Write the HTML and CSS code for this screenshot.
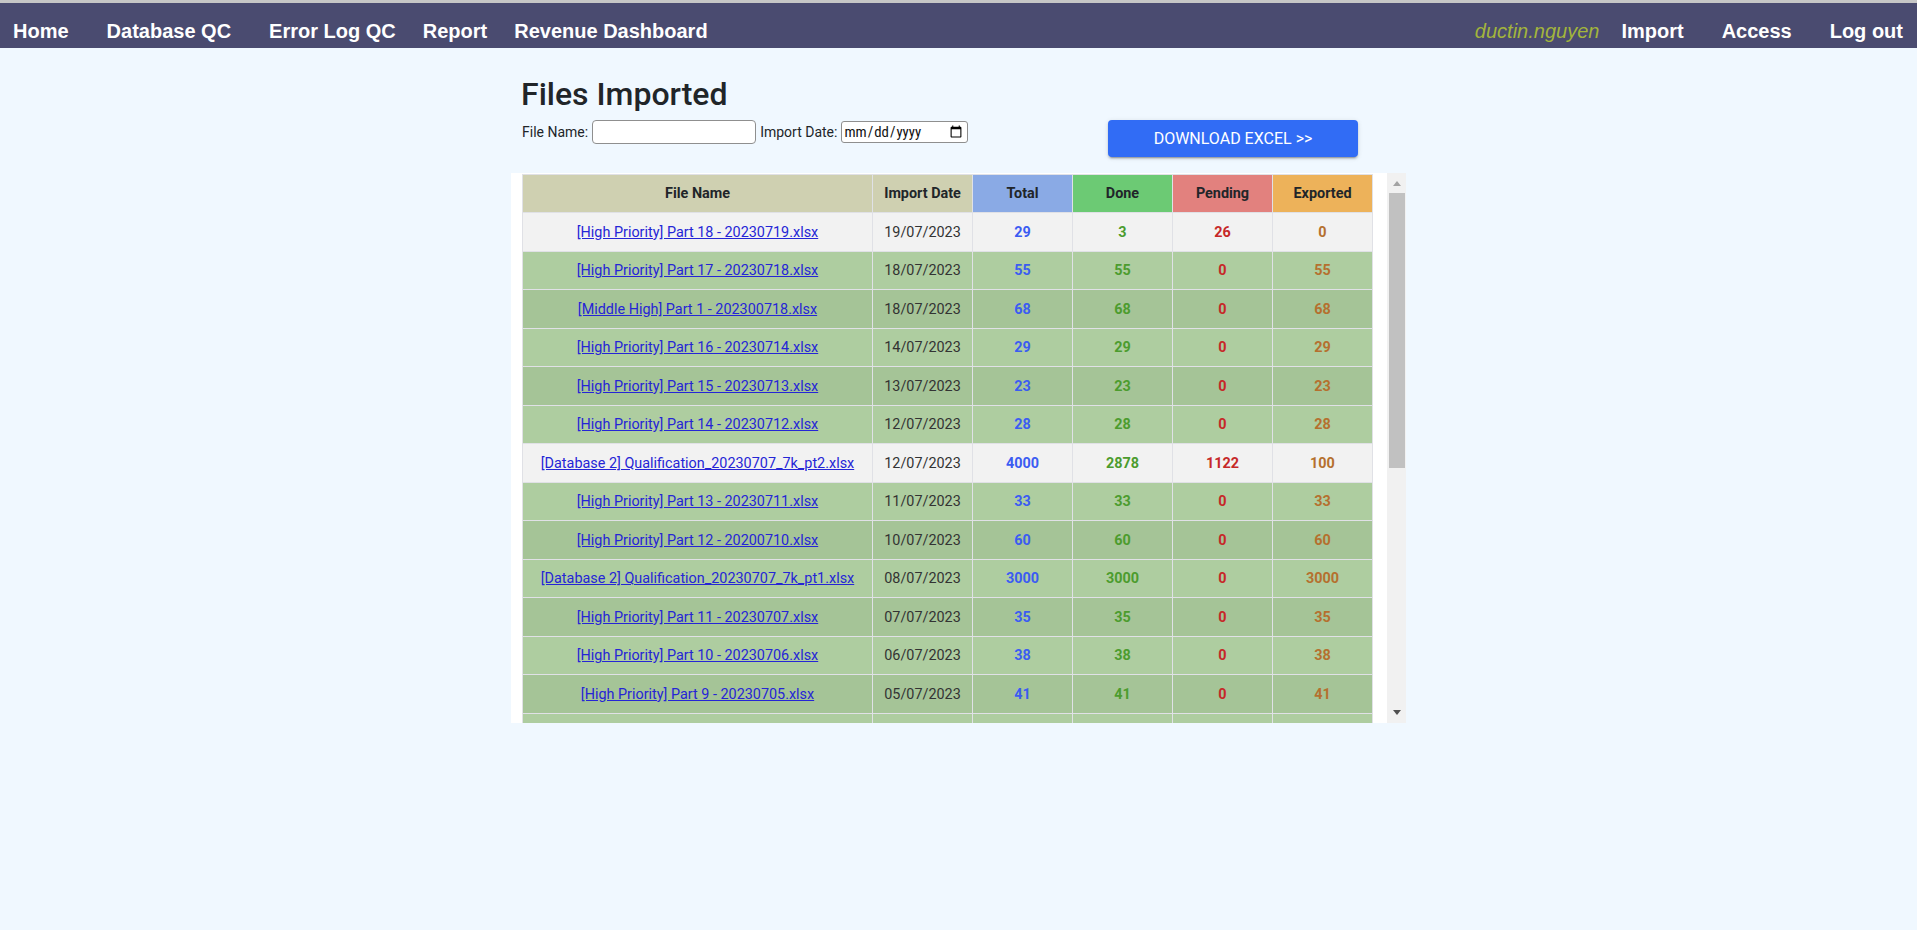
FILE: index.html
```html
<!DOCTYPE html>
<html lang="en">
<head>
<meta charset="utf-8">
<title>Files Imported</title>
<link rel="stylesheet" href="styles.css">
</head>
<body>
<nav class="topnav">
  <div class="nav-group">
    <a class="nav-link nav-link--wide" href="#">Home</a>
    <a class="nav-link nav-link--wide" href="#">Database QC</a>
    <a class="nav-link nav-link--mid" href="#">Error Log QC</a>
    <a class="nav-link nav-link--mid" href="#">Report</a>
    <a class="nav-link" href="#">Revenue Dashboard</a>
  </div>
  <div class="nav-group">
    <span class="nav-user">ductin.nguyen</span>
    <a class="nav-link nav-link--wide" href="#">Import</a>
    <a class="nav-link nav-link--wide" href="#">Access</a>
    <a class="nav-link" href="#">Log out</a>
  </div>
</nav>

<main class="page">
  <h2 class="page-title">Files Imported</h2>
  <div class="filters">
    <div class="filter-group">
      <label class="filter-label" for="fname">File Name:</label>
      <input class="text-input" id="fname" type="text">
      <label class="filter-label" for="fdate">Import Date:</label>
      <input class="date-input" id="fdate" type="date">
    </div>
    <button class="btn-download" type="button">DOWNLOAD EXCEL &gt;&gt;</button>
  </div>

  <div class="table-box">
    <div class="table-viewport">
      <table class="files-table">
        <colgroup>
          <col class="col-name"><col class="col-num"><col class="col-num"><col class="col-num"><col class="col-num"><col class="col-num">
        </colgroup>
        <thead>
          <tr>
            <th class="th-name">File Name</th>
            <th class="th-name">Import Date</th>
            <th class="th-total">Total</th>
            <th class="th-done">Done</th>
            <th class="th-pending">Pending</th>
            <th class="th-exported">Exported</th>
          </tr>
        </thead>
        <tbody>
          <tr class="pending"><td><a href="#">[High Priority] Part 18 - 20230719.xlsx</a></td><td class="date">19/07/2023</td><td class="n-total">29</td><td class="n-done">3</td><td class="n-pending">26</td><td class="n-exported">0</td></tr>
          <tr class="done"><td><a href="#">[High Priority] Part 17 - 20230718.xlsx</a></td><td class="date">18/07/2023</td><td class="n-total">55</td><td class="n-done">55</td><td class="n-pending">0</td><td class="n-exported">55</td></tr>
          <tr class="done"><td><a href="#">[Middle High] Part 1 - 202300718.xlsx</a></td><td class="date">18/07/2023</td><td class="n-total">68</td><td class="n-done">68</td><td class="n-pending">0</td><td class="n-exported">68</td></tr>
          <tr class="done"><td><a href="#">[High Priority] Part 16 - 20230714.xlsx</a></td><td class="date">14/07/2023</td><td class="n-total">29</td><td class="n-done">29</td><td class="n-pending">0</td><td class="n-exported">29</td></tr>
          <tr class="done"><td><a href="#">[High Priority] Part 15 - 20230713.xlsx</a></td><td class="date">13/07/2023</td><td class="n-total">23</td><td class="n-done">23</td><td class="n-pending">0</td><td class="n-exported">23</td></tr>
          <tr class="done"><td><a href="#">[High Priority] Part 14 - 20230712.xlsx</a></td><td class="date">12/07/2023</td><td class="n-total">28</td><td class="n-done">28</td><td class="n-pending">0</td><td class="n-exported">28</td></tr>
          <tr class="pending"><td><a href="#">[Database 2] Qualification_20230707_7k_pt2.xlsx</a></td><td class="date">12/07/2023</td><td class="n-total">4000</td><td class="n-done">2878</td><td class="n-pending">1122</td><td class="n-exported">100</td></tr>
          <tr class="done"><td><a href="#">[High Priority] Part 13 - 20230711.xlsx</a></td><td class="date">11/07/2023</td><td class="n-total">33</td><td class="n-done">33</td><td class="n-pending">0</td><td class="n-exported">33</td></tr>
          <tr class="done"><td><a href="#">[High Priority] Part 12 - 20200710.xlsx</a></td><td class="date">10/07/2023</td><td class="n-total">60</td><td class="n-done">60</td><td class="n-pending">0</td><td class="n-exported">60</td></tr>
          <tr class="done"><td><a href="#">[Database 2] Qualification_20230707_7k_pt1.xlsx</a></td><td class="date">08/07/2023</td><td class="n-total">3000</td><td class="n-done">3000</td><td class="n-pending">0</td><td class="n-exported">3000</td></tr>
          <tr class="done"><td><a href="#">[High Priority] Part 11 - 20230707.xlsx</a></td><td class="date">07/07/2023</td><td class="n-total">35</td><td class="n-done">35</td><td class="n-pending">0</td><td class="n-exported">35</td></tr>
          <tr class="done"><td><a href="#">[High Priority] Part 10 - 20230706.xlsx</a></td><td class="date">06/07/2023</td><td class="n-total">38</td><td class="n-done">38</td><td class="n-pending">0</td><td class="n-exported">38</td></tr>
          <tr class="done"><td><a href="#">[High Priority] Part 9 - 20230705.xlsx</a></td><td class="date">05/07/2023</td><td class="n-total">41</td><td class="n-done">41</td><td class="n-pending">0</td><td class="n-exported">41</td></tr>
          <tr class="done"><td><a href="#">[High Priority] Part 8 - 20230704.xlsx</a></td><td class="date">04/07/2023</td><td class="n-total">45</td><td class="n-done">45</td><td class="n-pending">0</td><td class="n-exported">45</td></tr>
        </tbody>
      </table>
    </div>
    <div class="scrollbar" aria-hidden="true">
      <div class="sb-btn"><span class="sb-arrow sb-arrow--up"></span></div>
      <div class="sb-track"><div class="sb-thumb"></div></div>
      <div class="sb-btn"><span class="sb-arrow sb-arrow--down"></span></div>
    </div>
  </div>
</main>
</body>
</html>
```

FILE: styles.css
```css
* {
  box-sizing: border-box;
}

html,
body {
  margin: 0;
  padding: 0;
}

body {
  background: #f0f8ff;
  color: #212529;
  font-family: Roboto, "Noto Sans", "Liberation Sans", sans-serif;
}

/* ---------- top navigation ---------- */
.topnav {
  display: flex;
  align-items: center;
  justify-content: space-between;
  height: 48px;
  padding: 12px 14px 0 13px;
  border-top: 3px solid #c6c6c6;
  background: #4a4b70;
  font-family: "Liberation Sans", Arial, sans-serif;
  font-size: 20px;
  font-weight: 700;
}

.nav-group {
  display: flex;
  align-items: center;
}

.nav-link {
  color: #ffffff;
  text-decoration: none;
}

.nav-link--wide {
  margin-right: 38px;
}

.nav-link--mid {
  margin-right: 27px;
}

.nav-user {
  margin-right: 22px;
  color: #a3b53c;
  font-style: italic;
  font-weight: 400;
}

/* ---------- page ---------- */
.page {
  width: 895px;
  margin: 0 auto;
}

.page-title {
  margin: 27px 0 7px;
  padding-left: 10px;
  font-size: 32px;
  font-weight: 500;
  line-height: 1.2;
  color: #212529;
}

.filters {
  display: flex;
  align-items: flex-start;
  padding: 0 48px 0 11px;
}

.filter-group {
  display: flex;
  align-items: center;
  gap: 4px;
  height: 24px;
}

.filter-label {
  font-size: 14px;
  color: #212529;
}

.text-input {
  width: 164px;
  height: 24px;
  margin: 0;
  padding: 1px 4px;
  border: 1px solid #8f8f8f;
  border-radius: 4px;
  background: #fff;
  font-family: Roboto, sans-serif;
  font-size: 14px;
}

.date-input {
  width: 127px;
  height: 22px;
  margin: 0;
  padding: 0 2px 0 1px;
  border: 1px solid #8f8f8f;
  border-radius: 3px;
  background: #fff;
  color: #111;
  font-family: "Liberation Sans Narrow", "Roboto Condensed", "Liberation Sans", sans-serif;
  font-size: 14.8px;
}

.btn-download {
  width: 250px;
  height: 37px;
  margin: 0 0 0 auto;
  padding: 0;
  border: 0;
  border-radius: 4px;
  background: #316cf5;
  color: #ffffff;
  font-family: Roboto, sans-serif;
  font-size: 16px;
  font-weight: 400;
  box-shadow: 0 3px 1px -2px rgba(0, 0, 0, 0.2), 0 2px 2px 0 rgba(0, 0, 0, 0.14), 0 1px 5px 0 rgba(0, 0, 0, 0.12);
  cursor: pointer;
}

/* ---------- table box ---------- */
.table-box {
  display: flex;
  height: 550px;
  margin-top: 16px;
  background: #ffffff;
}

.table-viewport {
  flex: 1;
  min-width: 0;
  padding: 1px 0 0 11px;
  overflow: hidden;
}

.scrollbar {
  display: flex;
  flex-direction: column;
  width: 19px;
  background: #f1f1f1;
}

.sb-btn {
  display: flex;
  align-items: center;
  justify-content: center;
  height: 17px;
  flex: none;
}

.sb-arrow {
  width: 0;
  height: 0;
  border-left: 4.5px solid transparent;
  border-right: 4.5px solid transparent;
}

.sb-arrow--up {
  margin-top: 4px;
  border-bottom: 5px solid #a3a3a3;
}

.sb-arrow--down {
  margin-bottom: 4px;
  border-top: 5px solid #505050;
}

.sb-track {
  flex: 1;
  padding: 3px 1px 0 2px;
}

.sb-thumb {
  height: 275px;
  background: #c1c1c1;
}

/* ---------- table ---------- */
.files-table {
  width: 850px;
  border-collapse: collapse;
  table-layout: fixed;
  font-size: 14.4px;
}

.col-name {
  width: 350px;
}

.col-num {
  width: 100px;
}

.files-table th,
.files-table td {
  padding: 0 6px;
  border: 1px solid #e0e1e6;
  text-align: center;
  vertical-align: middle;
  white-space: nowrap;
}

.files-table thead tr {
  height: 38px;
}

.files-table tbody tr {
  height: 38.5px;
}

.files-table th {
  font-weight: 700;
  color: #212529;
}

.th-name {
  background: #cfd0b1;
}

.th-total {
  background: #8aaae5;
}

.th-done {
  background: #6cca74;
}

.th-pending {
  background: #e2817e;
}

.th-exported {
  background: #edb25a;
}

.files-table tr.pending td {
  background: #f2f2f2;
}

.files-table tr.done td {
  background: #aecda0;
}

.files-table tbody tr.done:nth-child(odd) td {
  background: #a5c497;
}

.files-table a {
  color: #2525d6;
  text-decoration: underline;
}

.date {
  color: #333333;
}

.n-total,
.n-done,
.n-pending,
.n-exported {
  font-weight: 700;
}

.n-total {
  color: #3b5cf2;
}

.n-done {
  color: #4c9c2e;
}

.n-pending {
  color: #c62828;
}

.n-exported {
  color: #b5702e;
}
```
